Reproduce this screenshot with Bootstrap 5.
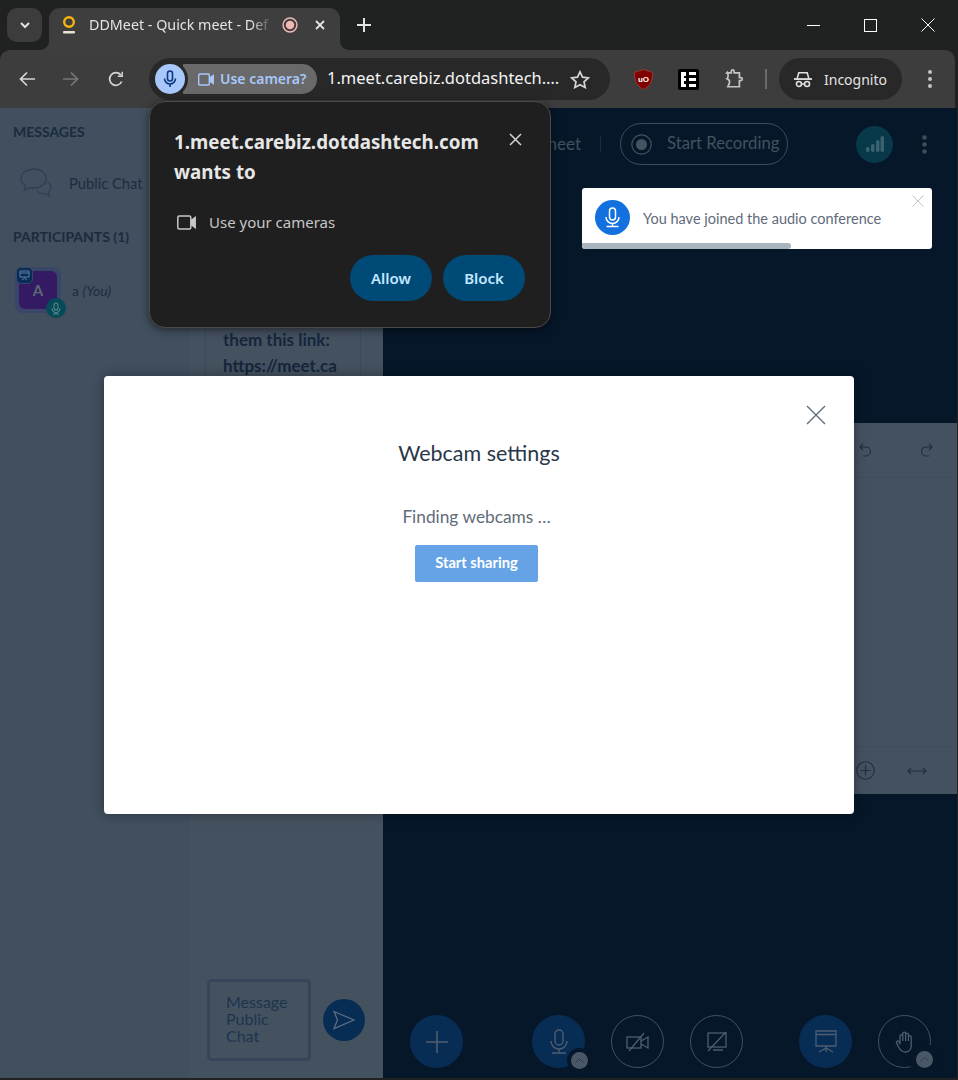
<!DOCTYPE html>
<html lang="en">
<head>
<meta charset="UTF-8">
<title>DDMeet - Quick meet</title>
<link rel="stylesheet" href="https://cdn.jsdelivr.net/npm/bootstrap@5.3.0/dist/css/bootstrap.min.css">
<style>
    html, body { height: 100%; overflow: hidden; }
    body { background: #202222; font-family: "Lato", "Liberation Sans", sans-serif; }
    svg { display: block; flex-shrink: 0; }

    /* Browser chrome */
    .chrome-ui { font-family: "Noto Sans", "Open Sans", sans-serif; }
    .tab-strip { height: 50px; padding: 8px 0 0 7px; background: #202222; }
    .tab-search { width: 35px; height: 34px; border-radius: 10px; background: #3c3c3c; }
    .tab-item { position: relative; width: 291px; height: 42px; margin-left: 7px; padding: 0 14px 8px 13px; background: #3e3e3e; border-radius: 11px 11px 0 0; }
    .tab-item::before, .tab-item::after { content: ""; position: absolute; bottom: 0; width: 10px; height: 10px; }
    .tab-item::before { left: -10px; background: radial-gradient(circle at 0 0, transparent 10px, #3e3e3e 10.5px); }
    .tab-item::after { right: -10px; background: radial-gradient(circle at 100% 0, transparent 10px, #3e3e3e 10.5px); }
    .tab-title { width: 189px; margin-left: 13px; font-size: 14.3px; color: #e3e3e3; white-space: nowrap; -webkit-mask-image: linear-gradient(90deg, #000 86%, transparent 97%); mask-image: linear-gradient(90deg, #000 86%, transparent 97%); }
    .new-tab { margin-left: 17px; margin-top: 10px; }
    .win-btns { margin-left: auto; padding-bottom: 8px; gap: 44px; padding-right: 23px; }
    .tool-bar { height: 58px; padding: 0 5px; background: #3d3d3d; border-radius: 10px 10px 0 0; margin-right: 3px; }
    .nav-btn { width: 44px; }
    .nav-btn-wide { width: 46px; }
    .addr-bar { width: 461px; height: 42px; margin-left: 10px; padding: 0 20px 0 6px; background: #282828; border-radius: 21px; }
    .mic-chip { position: relative; z-index: 1; width: 30px; height: 30px; border-radius: 50%; background: #a8c7fa; box-shadow: 0 0 0 3px #282828; }
    .cam-chip { width: 134px; height: 30px; margin-left: -2px; padding-left: 15px; gap: 6px; background: #696969; border-radius: 0 15px 15px 0; font-size: 14px; font-weight: 600; color: #a8c7fa; white-space: nowrap; }
    .cam-chip span { padding-bottom: 2px; }
    .addr-url { margin-left: 10px; padding-bottom: 2px; font-size: 16.5px; color: #f4f4f4; white-space: nowrap; }
    .star-btn { margin-left: auto; }
    .ext-row { margin-left: 24px; gap: 25px; }
    .ext-sep { width: 2px; height: 20px; margin: 0 12px 0 21px; background: #6a6a6a; }
    .incog-pill { width: 123px; height: 42px; gap: 12px; padding-left: 15px; background: #282828; border-radius: 21px; font-size: 14px; color: #e3e3e3; }
    .more-btn { margin-left: 26px; }

    /* Dimmed meeting page */
    .app-body { height: 970px; margin-right: 1px; }
    .user-side { width: 190px; padding: 15px 0 0 13px; background: #414f5e; }
    .side-head { font-size: 14px; font-weight: 700; color: #1b2b3e; line-height: 18px; }
    .public-row { margin: 25px 0 28px 7px; height: 34px; gap: 17px; font-size: 14.7px; color: #1d2d40; white-space: nowrap; }
    .you-row { margin: 21px 0 0 2px; gap: 11px; font-size: 14px; color: #1d2d40; }
    .avatar-box { position: relative; width: 46px; height: 46px; padding: 4px; background: #3a4668; border-radius: 8px; }
    .avatar-inner { width: 100%; height: 100%; background: #331a63; border-radius: 6px; font-size: 15px; font-weight: 700; color: #5f6775; }
    .badge-pres { position: absolute; top: 0; left: 1px; width: 17px; height: 17px; background: #082d55; border: 1px solid #3a4668; border-radius: 5px; }
    .badge-mic { position: absolute; right: -5px; bottom: -5px; width: 20px; height: 20px; background: #044a57; border-radius: 50%; }
    .chat-side { width: 193px; padding: 0 22px 17px 15px; background: #44515f; }
    .chat-msg { height: 500px; margin-bottom: auto; padding: 219px 20px 0 17px; border: solid #3c4a59; border-width: 0 1px; font-size: 17px; font-weight: 700; line-height: 26px; color: #14263c; overflow-wrap: anywhere; }
    .chat-input-row { gap: 12px; margin: 0 -4px 0 2px; }
    .chat-input { width: 104px; height: 82px; padding: 11px 10px 0 16px; border: 3px solid #36465a; border-radius: 5px; font-size: 16px; line-height: 17px; color: #1e3550; flex-shrink: 0; }
    .send-btn { width: 42px; height: 42px; background: #082d55; border-radius: 50%; flex-shrink: 0; }
    .main-area { background: #06172a; }
    .main-head { height: 72px; padding: 0 23px 0 0; margin-top: 0; }
    .meet-name { width: 198px; padding-right: 0; text-align: right; font-size: 17px; color: #44515f; white-space: nowrap; }
    .head-sep { width: 1px; height: 16px; margin: 0 19px; background: #1a2c40; }
    .rec-pill { width: 168px; height: 42px; padding-left: 10px; gap: 15px; border: 1px solid #3e4a59; border-radius: 21px; font-size: 16.7px; color: #44515f; white-space: nowrap; }
    .signal-dot { width: 37px; height: 37px; margin-left: auto; background: #07394a; border-radius: 50%; }
    .dots-btn { margin-left: 29px; margin-right: 7px; }
    .pres-wrap { height: 371px; margin-top: 243px; background: #44515f; }
    .pres-top { height: 55px; padding-right: 24px; gap: 50px; border-bottom: 1px solid #3f4c59; }
    .pres-mid { flex: 1; }
    .pres-bottom { height: 48px; padding-right: 30px; gap: 32px; border-top: 1px solid #3f4c59; }
    .action-bar { margin-top: auto; height: 53px; margin-bottom: 10px; padding: 0 26px 0 27px; }
    .act-circle { position: relative; width: 53px; height: 53px; border-radius: 50%; }
    .act-on { background: #082d55; }
    .act-off { border: 1px solid #44515f; }
    .act-chev { position: absolute; right: -3px; bottom: -1px; width: 17px; height: 17px; background: #4a5766; border-radius: 50%; box-shadow: 0 0 0 4px #06172a; }
    .act-chev-wide { box-shadow: 0 0 0 7px #06172a; }
    .act-group { gap: 26px; }
    .act-group-mid { margin: 0 56px 0 69px; }

    /* Things lying over the page */
    .perm-pop { position: absolute; left: 149px; top: 101px; z-index: 30; width: 402px; height: 227px; padding: 25px 25px 26px 24px; background: #1f1f1f; border: 1px solid #4a4a4a; border-radius: 16px; box-shadow: 0 2px 8px rgba(0, 0, 0, .5); }
    .perm-title { width: 320px; font-size: 18.75px; font-weight: 700; line-height: 30px; color: #e6e6e6; }
    .perm-row { margin: 24px 0 0 3px; gap: 13px; font-size: 15px; color: #c7c7c7; }
    .perm-btn { width: 82px; height: 46px; padding: 0; border: 0; background: #004a77; border-radius: 23px; font-size: 15px; font-weight: 600; color: #c2e7ff; }
    .perm-close { position: absolute; top: 31px; right: 28px; }
    .perm-actions { margin-top: auto; gap: 11px; }
    .join-note { position: absolute; left: 582px; top: 188px; z-index: 10; width: 350px; height: 61px; padding-left: 13px; gap: 13px; background: #fff; border-radius: 3px; font-size: 14.5px; color: #5f6b7a; overflow: hidden; }
    .note-icon { width: 35px; height: 35px; margin-bottom: 2px; background: #1270df; border-radius: 50%; }
    .note-close { position: absolute; top: 7px; right: 8px; }
    .note-bar { position: absolute; left: 0; bottom: 0; width: 209px; height: 6px; background: #a8b5bf; border-radius: 0 3px 3px 3px; }
    .cam-modal { position: absolute; left: 104px; top: 376px; z-index: 20; width: 750px; height: 438px; padding-top: 62px; background: #fff; border-radius: 4px; box-shadow: 0 0 12px rgba(0, 0, 0, .35); }
    .modal-x { position: absolute; top: 29px; right: 28px; }
    .cam-title { margin: 0; font-size: 21.5px; font-weight: 400; line-height: 30px; color: #2a3748; }
    .cam-find { margin: 39px 5px 0 0; font-size: 17.3px; line-height: 20px; color: #5f6b78; }
    .start-btn { width: 123px; height: 37px; margin: 18px 5px 0 0; padding: 0 0 3px; border: 0; background: #65a3e6; border-radius: 2px; font-size: 14.7px; font-weight: 700; color: #fff; }
</style>
</head>
<body>
<div class="d-flex flex-column">
    <!-- Browser tabs -->
    <div class="tab-strip chrome-ui d-flex align-items-start">
        <div class="tab-search d-flex align-items-center justify-content-center">
            <svg width="12" height="12" viewBox="0 0 12 12" fill="none" stroke="#e3e3e3" stroke-width="2"><path d="M2 4l4 4 4-4"/></svg>
        </div>
        <div class="tab-item d-flex align-items-center">
            <svg width="14" height="18" viewBox="0 0 14 18" fill="none"><circle cx="7" cy="6" r="4.8" stroke="#f5b50c" stroke-width="2.4"/><rect x="1" y="15" width="12" height="2.4" rx="1" fill="#e8e3d2"/></svg>
            <div class="tab-title">DDMeet - Quick meet - Def</div>
            <svg class="ms-1" width="16" height="16" viewBox="0 0 18 18" fill="none"><circle cx="9" cy="9" r="7.800" stroke="#f2b8b5" stroke-width="1.600"/><circle cx="9" cy="9" r="4.800" fill="#f2b8b5"/></svg>
            <svg class="ms-auto" width="12" height="12" viewBox="0 0 12 12" stroke="#e3e3e3" stroke-width="1.8"><path d="M2 2l8 8M10 2l-8 8"/></svg>
        </div>
        <svg class="new-tab" width="14" height="14" viewBox="0 0 14 14" stroke="#e3e3e3" stroke-width="2"><path d="M7 0v14M0 7h14"/></svg>
        <div class="win-btns d-flex align-items-center align-self-stretch">
            <svg width="13" height="13" viewBox="0 0 13 13" stroke="#fff"><path d="M0 6.5h13"/></svg>
            <svg width="13" height="13" viewBox="0 0 13 13" fill="none" stroke="#fff"><rect x=".5" y=".5" width="12" height="12"/></svg>
            <svg width="14" height="14" viewBox="0 0 14 14" stroke="#fff"><path d="M.5.5l13 13M13.5.5l-13 13"/></svg>
        </div>
    </div>

    <!-- Address bar row -->
    <div class="tool-bar chrome-ui d-flex align-items-center">
        <div class="nav-btn d-flex justify-content-center">
            <svg width="16" height="16" viewBox="0 0 16 16" fill="none" stroke="#d5d5d5" stroke-width="1.7"><path d="M16 8H1.5M8 1.5L1.5 8 8 14.5"/></svg>
        </div>
        <div class="nav-btn d-flex justify-content-center">
            <svg width="16" height="16" viewBox="0 0 16 16" fill="none" stroke="#777" stroke-width="1.7"><path d="M0 8h14.5M8 1.5L14.5 8 8 14.5"/></svg>
        </div>
        <div class="nav-btn-wide d-flex justify-content-center">
            <svg width="16" height="16" viewBox="0 0 16 16" fill="none" stroke="#d5d5d5" stroke-width="1.7"><path d="M13.7 10.5A6.3 6.3 0 1 1 13 4.2"/><path d="M14.2 .8v4.4H9.8" stroke-width="1.5"/></svg>
        </div>
        <div class="addr-bar d-flex align-items-center">
            <div class="mic-chip d-flex align-items-center justify-content-center">
                <svg width="14" height="18" viewBox="0 0 14 18" fill="none" stroke="#0a3a80" stroke-width="1.6"><rect x="4.5" y="1" width="5" height="10" rx="2.5"/><path d="M1.5 8.5a5.5 5.5 0 0 0 11 0M7 14v3"/></svg>
            </div>
            <div class="cam-chip d-flex align-items-center">
                <svg width="16" height="13" viewBox="0 0 16 13" fill="none" stroke="#a8c7fa" stroke-width="1.4"><rect x=".7" y="1" width="10.6" height="11" rx="1"/><path d="M11.5 5L15.3 2.5v8L11.5 8" fill="#a8c7fa"/></svg>
                <span>Use camera?</span>
            </div>
            <div class="addr-url">1.meet.carebiz.dotdashtech….</div>
            <svg class="star-btn" width="20" height="19" viewBox="0 0 20 19" fill="none" stroke="#d5d5d5" stroke-width="1.7"><path d="M10 1.8l2.5 5.3 5.8.7-4.3 4 1.2 5.7L10 14.7l-5.2 2.8L6 11.800l-4.300-4 5.800-.7z"/></svg>
        </div>
        <div class="ext-row d-flex align-items-center">
            <svg width="19" height="21" viewBox="0 0 19 21"><path d="M9.500 .5L18.500 3.300c0 8-1.500 13.500-9 17.200C2 16.800 .5 11.300 .5 3.300z" fill="#800000" stroke="#9a3a3a"/><text x="9.500" y="12.500" font-size="8" font-weight="700" font-family="Liberation Sans" text-anchor="middle" fill="#fff">uO</text></svg>
            <svg width="21" height="21" viewBox="0 0 21 21"><rect width="21" height="21" rx="2" fill="#000"/><path d="M3 3h5v4H6v2h2v3H6v3h2v3H3zM11 3h7v3h-7zM11 9h7v3h-7zM11 15h7v3h-7z" fill="#fff"/></svg>
            <svg width="20" height="20" viewBox="0 0 20 20" fill="none" stroke="#c4c4c4" stroke-width="1.800"><path d="M2 4h4.500V2.500a1.500 1.500 0 0 1 3 0V4H15v5h1.500a1.500 1.500 0 0 1 0 3H15v6.500H3l1.500-3.500c.8-2.500-.2-4-2.500-5 1.800-1.500 1.600-3.500 .5-6.500z" transform="translate(1 0) scale(.96)"/></svg>
        </div>
        <div class="ext-sep"></div>
        <div class="incog-pill d-flex align-items-center">
            <svg width="18" height="17" viewBox="0 0 20 18" fill="none" stroke="#e3e3e3" stroke-width="1.700"><path d="M0 8.500h20" stroke-width="2"/><path d="M3.500 8l1.800-6.500h9.400L16.500 8" fill="none"/><circle cx="5.500" cy="14" r="2.800"/><circle cx="14.500" cy="14" r="2.800"/><path d="M8.300 14h3.400"/></svg>
            <span>Incognito</span>
        </div>
        <svg class="more-btn" width="4" height="18" viewBox="0 0 4 18" fill="#c4c4c4"><circle cx="2" cy="2" r="2"/><circle cx="2" cy="9" r="2"/><circle cx="2" cy="16" r="2"/></svg>
    </div>

    <!-- Meeting page, dimmed by its modal -->
    <div class="app-body d-flex">
        <div class="user-side flex-shrink-0">
            <div class="side-head">MESSAGES</div>
            <div class="public-row d-flex align-items-center">
                <svg width="32" height="31" viewBox="0 0 32 31" fill="none" stroke="#2e4056" stroke-width="1.300"><path d="M14 1C7 1 1 5 1 10.500c0 3 1.800 5.500 4.500 7.200L4.500 22 10 19.500c1.300.3 2.700.5 4 .5 7 0 12-4 12-9.500S21 1 14 1z"/><path d="M27 14c2.500 1 4 3 4 5.500 0 2-1 3.500-2.500 4.500l.8 4-4.300-2.500c-3 .4-6.500-.5-8-3"/></svg>
                <span>Public Chat</span>
            </div>
            <div class="side-head">PARTICIPANTS (1)</div>
            <div class="you-row d-flex align-items-center">
                <div class="avatar-box">
                    <div class="avatar-inner d-flex align-items-center justify-content-center">A</div>
                    <div class="badge-pres d-flex align-items-center justify-content-center">
                        <svg width="11" height="11" viewBox="0 0 11 11" fill="none" stroke="#5f7ea8"><path d="M1 1h9v6H1zM1 3h9M5.500 7v1M3 10l2.500-2L8 10"/></svg>
                    </div>
                    <div class="badge-mic d-flex align-items-center justify-content-center">
                        <svg width="10" height="13" viewBox="0 0 10 13" fill="none" stroke="#5f8a92" stroke-width="1.100"><rect x="3" y="1" width="4" height="7" rx="2"/><path d="M1 6.500a4 4 0 0 0 8 0M2 12h6"/></svg>
                    </div>
                </div>
                <span>a <em>(You)</em></span>
            </div>
        </div>

        <div class="chat-side flex-shrink-0 d-flex flex-column">
            <div class="chat-msg">them this link: https://meet.carebiz.dotdashtech.com</div>
            <div class="chat-input-row d-flex align-items-center">
                <div class="chat-input">Message Public Chat</div>
                <div class="send-btn d-flex align-items-center justify-content-center">
                    <svg width="22" height="20" viewBox="0 0 22 20" fill="none" stroke="#5c6c80" stroke-width="1.300"><path d="M1 1.500L21 10 1 18.500 4.500 10z"/></svg>
                </div>
            </div>
        </div>

        <div class="main-area flex-grow-1 d-flex flex-column position-relative">
            <div class="main-head d-flex align-items-center">
                <div class="meet-name">Quick meet</div>
                <div class="head-sep"></div>
                <div class="rec-pill d-flex align-items-center">
                    <svg width="21" height="21" viewBox="0 0 21 21" fill="none"><circle cx="10.500" cy="10.500" r="9.700" stroke="#46525f" stroke-width="1.200"/><circle cx="10.500" cy="10.500" r="5.500" fill="#46525f"/></svg>
                    <span>Start Recording</span>
                </div>
                <div class="signal-dot d-flex align-items-center justify-content-center">
                    <svg width="18" height="16" viewBox="0 0 18 16" fill="#3b6270"><rect y="11" width="3.500" height="5" rx="1.700"/><rect x="5" y="8" width="3.500" height="8" rx="1.700"/><rect x="10" y="4" width="3.500" height="12" rx="1.700"/><rect x="14.500" width="3.500" height="16" rx="1.700"/></svg>
                </div>
                <svg class="dots-btn" width="5" height="19" viewBox="0 0 5 19" fill="#3f4b59"><circle cx="2.500" cy="2.500" r="2.300"/><circle cx="2.500" cy="9.500" r="2.300"/><circle cx="2.500" cy="16.500" r="2.300"/></svg>
            </div>
            <div class="pres-wrap d-flex flex-column">
                <div class="pres-top d-flex align-items-center justify-content-end">
                    <svg width="12" height="14" viewBox="0 0 12 14" fill="none" stroke="#1f2f42" stroke-width="1.100"><path d="M4 1L1 4l3 3M1 4h6a4.500 4.500 0 0 1 0 9H4"/></svg>
                    <svg width="12" height="14" viewBox="0 0 12 14" fill="none" stroke="#1f2f42" stroke-width="1.100"><path d="M8 1l3 3-3 3M11 4H5a4.500 4.500 0 0 0 0 9h3"/></svg>
                </div>
                <div class="pres-mid"></div>
                <div class="pres-bottom d-flex align-items-center justify-content-end">
                    <svg width="19" height="19" viewBox="0 0 19 19" fill="none" stroke="#1f2f42" stroke-width="1.100"><circle cx="9.500" cy="9.500" r="8.800"/><path d="M9.500 4.500v10M4.500 9.500h10"/></svg>
                    <svg width="20" height="8" viewBox="0 0 20 8" fill="none" stroke="#1f2f42" stroke-width="1.100"><path d="M1 4h18M4 1L1 4l3 3M16 1l3 3-3 3"/></svg>
                </div>
            </div>
            <div class="action-bar d-flex align-items-center">
                <div class="act-circle act-on d-flex align-items-center justify-content-center">
                    <svg width="22" height="22" viewBox="0 0 22 22" stroke="#4e5e70" stroke-width="1.600"><path d="M11 0v22M0 11h22"/></svg>
                </div>
                <div class="act-group act-group-mid d-flex">
                    <div class="act-circle act-on d-flex align-items-center justify-content-center">
                        <svg width="18" height="25" viewBox="0 0 18 25" fill="none" stroke="#4e5e70" stroke-width="1.400"><rect x="5" y="1" width="8" height="15" rx="4"/><path d="M1 12a8 8 0 0 0 16 0M9 20v3M2 24h14"/></svg>
                        <div class="act-chev d-flex align-items-center justify-content-center">
                            <svg width="9" height="5" viewBox="0 0 9 5" fill="none" stroke="#2c3a4a"><path d="M.5 4.500l4-4 4 4"/></svg>
                        </div>
                    </div>
                    <div class="act-circle act-off d-flex align-items-center justify-content-center">
                        <svg width="23" height="20" viewBox="0 0 23 20" fill="none" stroke="#4e5e70" stroke-width="1.300"><rect x="1" y="5" width="14" height="11"/><path d="M15 9l7-4v11l-7-4M3 19L18 1"/></svg>
                    </div>
                    <div class="act-circle act-off d-flex align-items-center justify-content-center">
                        <svg width="20" height="21" viewBox="0 0 20 21" fill="none" stroke="#4e5e70" stroke-width="1.300"><rect x="1" y="2" width="18" height="14"/><path d="M6 19h10M1 20L19 1"/></svg>
                    </div>
                </div>
                <div class="act-group d-flex">
                    <div class="act-circle act-on d-flex align-items-center justify-content-center">
                        <svg width="22" height="23" viewBox="0 0 22 23" fill="none" stroke="#4e5e70" stroke-width="1.300"><path d="M1 1h20v15H1zM1 4.500h20M11 16v2M4 22l7-4 7 4M11 18v4"/></svg>
                    </div>
                    <div class="act-circle act-off d-flex align-items-center justify-content-center">
                        <svg width="19" height="23" viewBox="0 0 19 23" fill="none" stroke="#4e5e70" stroke-width="1.300"><path d="M5 14V6a1.400 1.400 0 0 1 2.800 0v5V3.500a1.400 1.400 0 0 1 2.800 0V11V4.500a1.400 1.400 0 0 1 2.800 0V11V7a1.400 1.400 0 0 1 2.800 0v9c0 3.500-2.500 6-6 6-3 0-4.500-1.500-6-4L1.500 13c-.8-1.500 1.200-2.800 2.300-1.500L5 14"/></svg>
                        <div class="act-chev act-chev-wide d-flex align-items-center justify-content-center">
                            <svg width="9" height="5" viewBox="0 0 9 5" fill="none" stroke="#2c3a4a"><path d="M.5 4.500l4-4 4 4"/></svg>
                        </div>
                    </div>
                </div>
            </div>
        </div>
    </div>
</div>

<!-- Camera permission bubble -->
<div class="perm-pop chrome-ui d-flex flex-column">
    <div class="perm-title">1.meet.carebiz.dotdashtech.com wants to</div>
    <svg class="perm-close" width="13" height="13" viewBox="0 0 13 13" stroke="#d5d5d5" stroke-width="1.500"><path d="M1 1l11 11M12 1L1 12"/></svg>
    <div class="perm-row d-flex align-items-center">
        <svg width="19" height="15" viewBox="0 0 19 15" fill="none" stroke="#c7c7c7" stroke-width="1.500"><rect x=".8" y="1" width="13" height="13" rx="1.500"/><path d="M14 5.500l4.200-3v10l-4.200-3" fill="#c7c7c7"/></svg>
        <span>Use your cameras</span>
    </div>
    <div class="perm-actions d-flex justify-content-end">
        <button class="perm-btn" type="button">Allow</button>
        <button class="perm-btn" type="button">Block</button>
    </div>
</div>

<!-- Audio notification -->
<div class="join-note d-flex align-items-center">
    <div class="note-icon d-flex align-items-center justify-content-center flex-shrink-0">
        <svg width="15" height="21" viewBox="0 0 15 21" fill="none" stroke="#fff" stroke-width="1.500"><rect x="4.500" y="1" width="6" height="12" rx="3"/><path d="M1 10a6.500 6.500 0 0 0 13 0M1.500 19.500h12M7.500 17v2"/></svg>
    </div>
    <span>You have joined the audio conference</span>
    <svg class="note-close" width="12" height="12" viewBox="0 0 12 12" stroke="#bcc5cd"><path d="M.5.5l11 11M11.500.5l-11 11"/></svg>
    <div class="note-bar"></div>
</div>

<!-- Webcam settings modal -->
<div class="cam-modal d-flex flex-column align-items-center">
    <svg class="modal-x" width="20" height="20" viewBox="0 0 20 20" stroke="#5f6b78" stroke-width="1.300"><path d="M1 1l18 18M19 1L1 19"/></svg>
    <h5 class="cam-title">Webcam settings</h5>
    <div class="cam-find">Finding webcams …</div>
    <button class="start-btn" type="button">Start sharing</button>
</div>

<script src="https://cdn.jsdelivr.net/npm/bootstrap@5.3.0/dist/js/bootstrap.bundle.min.js"></script>
</body>
</html>
